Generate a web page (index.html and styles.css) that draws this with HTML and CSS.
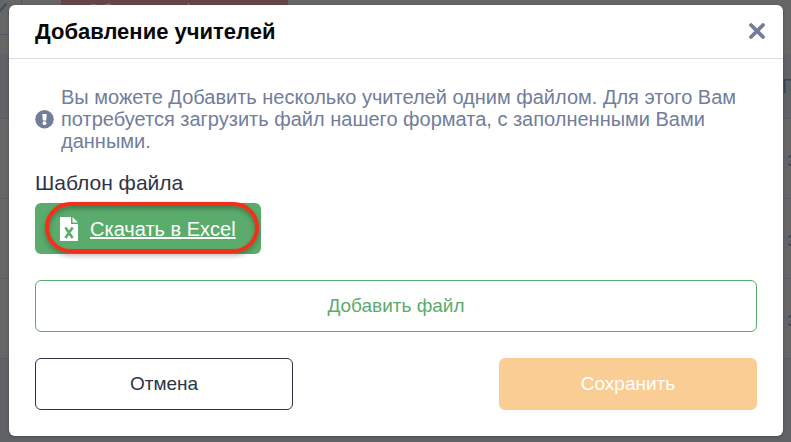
FILE: index.html
```html
<!DOCTYPE html>
<html lang="ru">
<head>
<meta charset="utf-8">
<title>Добавление учителей</title>
<link rel="stylesheet" href="styles.css">
</head>
<body>
<div class="page" aria-hidden="true">
  <div class="toolbar">
    <div class="picker"><svg width="8" height="9" viewBox="0 0 8 9"><path d="M0 8 6.500 0.500" fill="none" stroke="#3f4f60" stroke-width="2.200"/></svg></div>
    <div class="reset">Сбросить фильтры</div>
  </div>
  <div class="row row-head"><span>Г</span></div>
  <div class="row"><span>з</span></div>
  <div class="row"><span>з</span></div>
  <div class="row"><span>з</span></div>
</div>
<div class="overlay">
  <section class="modal" role="dialog" aria-labelledby="title">
    <header class="modal-header">
      <h1 id="title">Добавление учителей</h1>
      <button class="close" type="button" aria-label="Закрыть">
        <svg width="20" height="20" viewBox="0 0 20 20"><path d="M4 3 16 15M16 3 4 15" fill="none" stroke="#717d9b" stroke-width="3.800" stroke-linecap="round"/></svg>
      </button>
    </header>
    <div class="modal-body">
      <div class="notice">
        <svg width="19" height="19" viewBox="0 0 19 19"><circle cx="9.500" cy="9.200" r="9.200" fill="#717d9b"/><path d="M7.300 4h4.400l-.5 6.500H7.800z" fill="#fff"/><circle cx="9.500" cy="13.200" r="1.900" fill="#fff"/></svg>
        <p>Вы можете Добавить несколько учителей одним файлом. Для этого Вам потребуется загрузить файл нашего формата, с заполненными Вами данными.</p>
      </div>
      <p class="label">Шаблон файла</p>
      <a class="download" href="#">
        <svg width="18" height="24" viewBox="0 0 18 24"><path d="M0 0h11v7h7v17H0z" fill="#fff"/><path d="M12.500 0 18 5.500h-5.500z" fill="#fff"/><path d="M5.400 10.500 12.600 21M12.600 10.500 5.400 21" fill="none" stroke="#5aab6c" stroke-width="2.600"/></svg>
        <span>Скачать в Excel</span>
      </a>
      <button class="btn add" type="button">Добавить файл</button>
      <div class="actions">
        <button class="btn cancel" type="button">Отмена</button>
        <button class="btn save" type="button">Сохранить</button>
      </div>
    </div>
  </section>
</div>
</body>
</html>
```
FILE: styles.css
```css
* { box-sizing: border-box; }
body {
  margin: 0;
  min-height: 100vh;
  overflow-x: hidden;
  background: #606265;
  color: #2d3448;
  font: 20px/22px "Liberation Sans", Arial, sans-serif;
}
h1, p { margin: 0; }
svg { flex: none; display: block; }
.page { color: #39465a; }
.toolbar {
  display: flex;
  align-items: flex-start;
  gap: 39px;
  height: 54px;
  background: #666;
}
.picker {
  width: 22px;
  height: 35px;
  padding-top: 3px;
  border: solid #4c5a68;
  border-width: 0 1px 1px 0;
}
.reset {
  width: 227px;
  height: 22px;
  background: #664546;
  color: #7d6d6e;
  text-align: center;
}
.row {
  display: flex;
  align-items: center;
  justify-content: flex-end;
  height: 80px;
  background: #666;
  border-bottom: 1px solid #595d68;
}
.row span { width: 4px; }
.row-head { height: 65px; background: #606265; }
.row-head span { width: 9px; }
.overlay {
  position: absolute;
  inset: 0;
  padding: 5px 8px 0 9px;
}
.modal {
  background: #fff;
  border-radius: 6px;
  box-shadow: 0 1px 3px rgba(0, 0, 0, .25);
}
.modal-header {
  display: flex;
  align-items: center;
  justify-content: space-between;
  height: 54px;
  padding: 0 16px 0 26px;
  border-bottom: 1px solid #d8dde5;
}
h1 { color: #080808; font-size: 22px; font-weight: 700; }
.close { padding: 0; border: 0; background: none; }
.modal-body { padding: 27px 26px 26px; }
.notice {
  display: flex;
  align-items: center;
  gap: 7px;
  color: #717d9b;
}
.label { margin: 20px 0 9px; font-size: 21px; }
.download {
  position: relative;
  display: flex;
  align-items: center;
  gap: 12px;
  width: fit-content;
  height: 51px;
  padding: 0 25px;
  border-radius: 6px;
  background: #5aab6c;
  color: #fff;
}
.download::after {
  content: "";
  position: absolute;
  inset: -1px 2px 1px 10px;
  border: 4px solid #f52d19;
  border-radius: 26px;
  box-shadow: 0 3px 5px rgba(0, 0, 0, .25), inset 0 3px 4px rgba(0, 0, 0, .25);
}
.btn {
  height: 52px;
  border: 1px solid;
  border-radius: 6px;
  background: #fff;
  font: inherit;
  font-size: 19px;
}
.add { display: block; width: 100%; margin: 26px 0; color: #5aab6c; }
.actions { display: flex; justify-content: space-between; }
.actions .btn { width: 258px; }
.cancel { color: #2d3448; }
.save { background: #facd95; border-color: #facd95; color: #fff; }
```
